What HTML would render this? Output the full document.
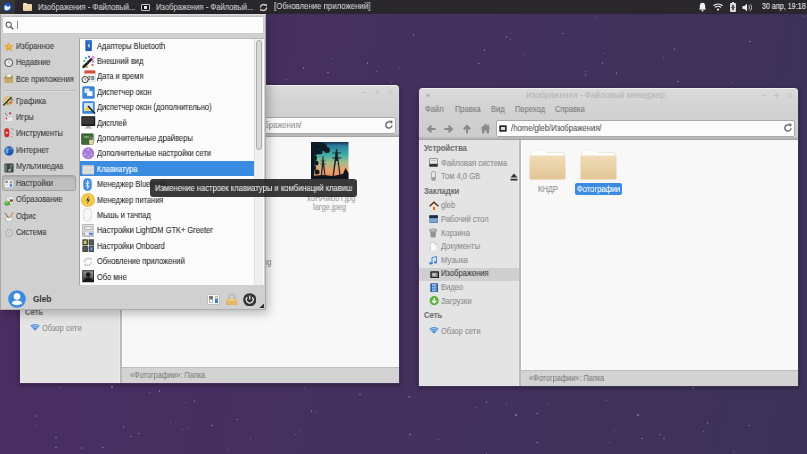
<!DOCTYPE html><html><head><meta charset="utf-8"><style>
*{margin:0;padding:0;box-sizing:border-box}
html,body{width:807px;height:454px;overflow:hidden}
body{position:relative;font-family:"Liberation Sans", sans-serif;background:linear-gradient(100deg,#4b2d63 0%,#45305f 40%,#3c3259 100%)}
.a{position:absolute}
.t{white-space:nowrap;transform-origin:0 0;will-change:transform;-webkit-text-stroke:0.1px currentColor}
</style></head><body>
<div class="a" style="left:412.9px;top:34.4px;width:1.3px;height:1.3px;background:rgba(185,165,215,.55);border-radius:50%"></div>
<div class="a" style="left:331.79999999999995px;top:58.199999999999996px;width:1.3px;height:1.3px;background:rgba(185,165,215,.55);border-radius:50%"></div>
<div class="a" style="left:366.5px;top:62.4px;width:1.3px;height:1.3px;background:rgba(185,165,215,.55);border-radius:50%"></div>
<div class="a" style="left:302.59999999999997px;top:67.4px;width:1.3px;height:1.3px;background:rgba(185,165,215,.55);border-radius:50%"></div>
<div class="a" style="left:327.4px;top:72.2px;width:1.3px;height:1.3px;background:rgba(185,165,215,.55);border-radius:50%"></div>
<div class="a" style="left:375.7px;top:71.2px;width:1.3px;height:1.3px;background:rgba(185,165,215,.55);border-radius:50%"></div>
<div class="a" style="left:399.0px;top:67.80000000000001px;width:1.3px;height:1.3px;background:rgba(185,165,215,.55);border-radius:50%"></div>
<div class="a" style="left:286.0px;top:78.9px;width:1.3px;height:1.3px;background:rgba(185,165,215,.55);border-radius:50%"></div>
<div class="a" style="left:391.0px;top:81.7px;width:1.3px;height:1.3px;background:rgba(185,165,215,.55);border-radius:50%"></div>
<div class="a" style="left:595.9px;top:17.2px;width:1.3px;height:1.3px;background:rgba(185,165,215,.55);border-radius:50%"></div>
<div class="a" style="left:505.7px;top:36.4px;width:1.3px;height:1.3px;background:rgba(185,165,215,.55);border-radius:50%"></div>
<div class="a" style="left:509.59999999999997px;top:38.8px;width:1.3px;height:1.3px;background:rgba(185,165,215,.55);border-radius:50%"></div>
<div class="a" style="left:562.4px;top:32.6px;width:1.3px;height:1.3px;background:rgba(185,165,215,.55);border-radius:50%"></div>
<div class="a" style="left:484.09999999999997px;top:49.4px;width:1.3px;height:1.3px;background:rgba(185,165,215,.55);border-radius:50%"></div>
<div class="a" style="left:522.5px;top:54.199999999999996px;width:1.3px;height:1.3px;background:rgba(185,165,215,.55);border-radius:50%"></div>
<div class="a" style="left:478.4px;top:62.8px;width:1.3px;height:1.3px;background:rgba(185,165,215,.55);border-radius:50%"></div>
<div class="a" style="left:604.1px;top:53.199999999999996px;width:1.3px;height:1.3px;background:rgba(185,165,215,.55);border-radius:50%"></div>
<div class="a" style="left:601.6999999999999px;top:62.3px;width:1.3px;height:1.3px;background:rgba(185,165,215,.55);border-radius:50%"></div>
<div class="a" style="left:584.9px;top:71.0px;width:1.3px;height:1.3px;background:rgba(185,165,215,.55);border-radius:50%"></div>
<div class="a" style="left:584.9px;top:74.30000000000001px;width:1.3px;height:1.3px;background:rgba(185,165,215,.55);border-radius:50%"></div>
<div class="a" style="left:616.0px;top:72.4px;width:1.3px;height:1.3px;background:rgba(185,165,215,.55);border-radius:50%"></div>
<div class="a" style="left:663.0px;top:56.6px;width:1.3px;height:1.3px;background:rgba(185,165,215,.55);border-radius:50%"></div>
<div class="a" style="left:673.6px;top:48.4px;width:1.3px;height:1.3px;background:rgba(185,165,215,.55);border-radius:50%"></div>
<div class="a" style="left:749.4px;top:40.699999999999996px;width:1.3px;height:1.3px;background:rgba(185,165,215,.55);border-radius:50%"></div>
<div class="a" style="left:677.4px;top:80.5px;width:1.3px;height:1.3px;background:rgba(185,165,215,.55);border-radius:50%"></div>
<div class="a" style="left:731.1px;top:82.0px;width:1.3px;height:1.3px;background:rgba(185,165,215,.55);border-radius:50%"></div>
<div class="a" style="left:803.1px;top:15.799999999999999px;width:1.3px;height:1.3px;background:rgba(185,165,215,.55);border-radius:50%"></div>
<div class="a" style="left:59.699999999999996px;top:386.9px;width:1.3px;height:1.3px;background:rgba(185,165,215,.55);border-radius:50%"></div>
<div class="a" style="left:35.0px;top:415.4px;width:1.3px;height:1.3px;background:rgba(185,165,215,.55);border-radius:50%"></div>
<div class="a" style="left:35.0px;top:424.79999999999995px;width:1.3px;height:1.3px;background:rgba(185,165,215,.55);border-radius:50%"></div>
<div class="a" style="left:55.4px;top:436.7px;width:1.3px;height:1.3px;background:rgba(185,165,215,.55);border-radius:50%"></div>
<div class="a" style="left:55.4px;top:446.9px;width:1.3px;height:1.3px;background:rgba(185,165,215,.55);border-radius:50%"></div>
<div class="a" style="left:80.80000000000001px;top:447.4px;width:1.3px;height:1.3px;background:rgba(185,165,215,.55);border-radius:50%"></div>
<div class="a" style="left:111.4px;top:386.4px;width:1.3px;height:1.3px;background:rgba(185,165,215,.55);border-radius:50%"></div>
<div class="a" style="left:149.0px;top:392.09999999999997px;width:1.3px;height:1.3px;background:rgba(185,165,215,.55);border-radius:50%"></div>
<div class="a" style="left:158.9px;top:390.4px;width:1.3px;height:1.3px;background:rgba(185,165,215,.55);border-radius:50%"></div>
<div class="a" style="left:184.70000000000002px;top:402.09999999999997px;width:1.3px;height:1.3px;background:rgba(185,165,215,.55);border-radius:50%"></div>
<div class="a" style="left:193.8px;top:400.4px;width:1.3px;height:1.3px;background:rgba(185,165,215,.55);border-radius:50%"></div>
<div class="a" style="left:170.0px;top:421.9px;width:1.3px;height:1.3px;background:rgba(185,165,215,.55);border-radius:50%"></div>
<div class="a" style="left:123.2px;top:426.29999999999995px;width:1.3px;height:1.3px;background:rgba(185,165,215,.55);border-radius:50%"></div>
<div class="a" style="left:130.4px;top:435.79999999999995px;width:1.3px;height:1.3px;background:rgba(185,165,215,.55);border-radius:50%"></div>
<div class="a" style="left:138.3px;top:433.0px;width:1.3px;height:1.3px;background:rgba(185,165,215,.55);border-radius:50%"></div>
<div class="a" style="left:181.9px;top:429.0px;width:1.3px;height:1.3px;background:rgba(185,165,215,.55);border-radius:50%"></div>
<div class="a" style="left:186.70000000000002px;top:427.79999999999995px;width:1.3px;height:1.3px;background:rgba(185,165,215,.55);border-radius:50%"></div>
<div class="a" style="left:211.3px;top:425.09999999999997px;width:1.3px;height:1.3px;background:rgba(185,165,215,.55);border-radius:50%"></div>
<div class="a" style="left:236.4px;top:419.09999999999997px;width:1.3px;height:1.3px;background:rgba(185,165,215,.55);border-radius:50%"></div>
<div class="a" style="left:250.20000000000002px;top:437.79999999999995px;width:1.3px;height:1.3px;background:rgba(185,165,215,.55);border-radius:50%"></div>
<div class="a" style="left:227.20000000000002px;top:448.9px;width:1.3px;height:1.3px;background:rgba(185,165,215,.55);border-radius:50%"></div>
<div class="a" style="left:102.4px;top:446.9px;width:1.3px;height:1.3px;background:rgba(185,165,215,.55);border-radius:50%"></div>
<div class="a" style="left:303.79999999999995px;top:388.2px;width:1.3px;height:1.3px;background:rgba(185,165,215,.55);border-radius:50%"></div>
<div class="a" style="left:310.9px;top:410.4px;width:1.3px;height:1.3px;background:rgba(185,165,215,.55);border-radius:50%"></div>
<div class="a" style="left:314.9px;top:411.2px;width:1.3px;height:1.3px;background:rgba(185,165,215,.55);border-radius:50%"></div>
<div class="a" style="left:299.79999999999995px;top:430.2px;width:1.3px;height:1.3px;background:rgba(185,165,215,.55);border-radius:50%"></div>
<div class="a" style="left:294.59999999999997px;top:433.79999999999995px;width:1.3px;height:1.3px;background:rgba(185,165,215,.55);border-radius:50%"></div>
<div class="a" style="left:359.4px;top:394.09999999999997px;width:1.3px;height:1.3px;background:rgba(185,165,215,.55);border-radius:50%"></div>
<div class="a" style="left:408.9px;top:396.4px;width:1.3px;height:1.3px;background:rgba(185,165,215,.55);border-radius:50%"></div>
<div class="a" style="left:410.09999999999997px;top:434.2px;width:1.3px;height:1.3px;background:rgba(185,165,215,.55);border-radius:50%"></div>
<div class="a" style="left:408.09999999999997px;top:396.09999999999997px;width:1.3px;height:1.3px;background:rgba(185,165,215,.55);border-radius:50%"></div>
<div class="a" style="left:474.79999999999995px;top:407.2px;width:1.3px;height:1.3px;background:rgba(185,165,215,.55);border-radius:50%"></div>
<div class="a" style="left:485.9px;top:401.29999999999995px;width:1.3px;height:1.3px;background:rgba(185,165,215,.55);border-radius:50%"></div>
<div class="a" style="left:505.7px;top:404.0px;width:1.3px;height:1.3px;background:rgba(185,165,215,.55);border-radius:50%"></div>
<div class="a" style="left:515.3px;top:414.4px;width:1.3px;height:1.3px;background:rgba(185,165,215,.55);border-radius:50%"></div>
<div class="a" style="left:536.3px;top:413.2px;width:1.3px;height:1.3px;background:rgba(185,165,215,.55);border-radius:50%"></div>
<div class="a" style="left:547.0px;top:404.0px;width:1.3px;height:1.3px;background:rgba(185,165,215,.55);border-radius:50%"></div>
<div class="a" style="left:605.6999999999999px;top:400.09999999999997px;width:1.3px;height:1.3px;background:rgba(185,165,215,.55);border-radius:50%"></div>
<div class="a" style="left:637.4px;top:414.4px;width:1.3px;height:1.3px;background:rgba(185,165,215,.55);border-radius:50%"></div>
<div class="a" style="left:613.6999999999999px;top:429.79999999999995px;width:1.3px;height:1.3px;background:rgba(185,165,215,.55);border-radius:50%"></div>
<div class="a" style="left:608.5px;top:441.7px;width:1.3px;height:1.3px;background:rgba(185,165,215,.55);border-radius:50%"></div>
<div class="a" style="left:641.4px;top:438.2px;width:1.3px;height:1.3px;background:rgba(185,165,215,.55);border-radius:50%"></div>
<div class="a" style="left:659.3px;top:434.2px;width:1.3px;height:1.3px;background:rgba(185,165,215,.55);border-radius:50%"></div>
<div class="a" style="left:663.3px;top:438.2px;width:1.3px;height:1.3px;background:rgba(185,165,215,.55);border-radius:50%"></div>
<div class="a" style="left:706.9px;top:422.29999999999995px;width:1.3px;height:1.3px;background:rgba(185,165,215,.55);border-radius:50%"></div>
<div class="a" style="left:703.0px;top:431.0px;width:1.3px;height:1.3px;background:rgba(185,165,215,.55);border-radius:50%"></div>
<div class="a" style="left:409.4px;top:433.79999999999995px;width:1.3px;height:1.3px;background:rgba(185,165,215,.55);border-radius:50%"></div>
<div class="a" style="left:437.9px;top:439.0px;width:1.3px;height:1.3px;background:rgba(185,165,215,.55);border-radius:50%"></div>
<div class="a" style="left:536.4px;top:442.09999999999997px;width:1.3px;height:1.3px;background:rgba(185,165,215,.55);border-radius:50%"></div>
<div class="a" style="left:485.9px;top:452.79999999999995px;width:1.3px;height:1.3px;background:rgba(185,165,215,.55);border-radius:50%"></div>
<div class="a" style="left:693.1px;top:387.4px;width:1.3px;height:1.3px;background:rgba(185,165,215,.55);border-radius:50%"></div>
<div class="a" style="left:748.3px;top:425.2px;width:1.3px;height:1.3px;background:rgba(185,165,215,.55);border-radius:50%"></div>
<div class="a" style="left:732.8px;top:451.2px;width:1.3px;height:1.3px;background:rgba(185,165,215,.55);border-radius:50%"></div>
<div class="a" style="left:0px;top:0px;width:807px;height:14px;background:#29272b"></div>
<div class="a" style="left:0px;top:0px;width:15px;height:14px;background:#3a3936"></div>
<svg class="a" style="left:2px;top:1.8px" width="11" height="11" viewBox="0 0 11 11"><circle cx="5.4" cy="5.1" r="4.8" fill="#0f3c8c"/><circle cx="5.4" cy="5.1" r="3.9" fill="#1f55b0"/><path d="M2.5 4.4 Q2.8 3.1 4 3.5 L5.5 4.7 L6.9 4.8 L7.5 3.6 L8.3 4.6 Q8.4 6.6 7.3 7.6 Q6 8.5 4 8.4 Q2.5 8.2 2.5 6.8Z" fill="#f4f8ff"/></svg>
<div class="a" style="left:22.5px;top:3.5px;width:9.2px;height:7.2px;background:#efd9a8;border-radius:1px"></div>
<div class="a" style="left:22.5px;top:2.8px;width:4px;height:2px;background:#f6e6c4;border-radius:1px 1px 0 0"></div>
<div class="a t" style="left:37.5px;top:1.74px;font-size:8.512px;line-height:10.214px;color:#d2d2d2;font-weight:400;transform:scaleX(0.8929);">Изображения - Файловый...</div>
<div class="a" style="left:141px;top:3.5px;width:8.5px;height:7px;background:#1b1b1b;border:1px solid #c8c8c8;border-radius:1px"></div>
<div class="a" style="left:143.5px;top:5.5px;width:3.5px;height:3px;background:#e8e8e8"></div>
<div class="a t" style="left:155.6px;top:1.74px;font-size:8.512px;line-height:10.214px;color:#d2d2d2;font-weight:400;transform:scaleX(0.8929);">Изображения - Файловый...</div>
<svg class="a" style="left:258.5px;top:2.5px" width="9" height="9" viewBox="0 0 9 9"><path d="M1.5 4.5 A3 3 0 0 1 6.8 2.6" stroke="#cfcfcf" stroke-width="1.4" fill="none"/><path d="M7.5 4.5 A3 3 0 0 1 2.2 6.4" stroke="#cfcfcf" stroke-width="1.4" fill="none"/><path d="M5.6 1.2 L8 1.2 L8 3.8Z" fill="#cfcfcf"/><path d="M3.4 7.8 L1 7.8 L1 5.2Z" fill="#cfcfcf"/></svg>
<div class="a t" style="left:273.5px;top:1.48px;font-size:8.792px;line-height:10.55px;color:#d2d2d2;font-weight:400;transform:scaleX(0.8929);">[Обновление приложений]</div>
<svg class="a" style="left:698px;top:2px" width="9" height="10" viewBox="0 0 9 10"><path d="M4.5 0.8 C2.5 0.8 1.8 2.4 1.8 4.2 L1.8 6.2 L0.8 7.6 L8.2 7.6 L7.2 6.2 L7.2 4.2 C7.2 2.4 6.5 0.8 4.5 0.8Z" fill="#f2f2f2"/><circle cx="4.5" cy="8.6" r="1" fill="#f2f2f2"/></svg>
<svg class="a" style="left:712.5px;top:3px" width="10" height="8" viewBox="0 0 10 8"><path d="M0.5 2.8 A6.5 6.5 0 0 1 9.5 2.8" stroke="#eee" stroke-width="1.2" fill="none"/><path d="M2.2 4.5 A4 4 0 0 1 7.8 4.5" stroke="#eee" stroke-width="1.2" fill="none"/><circle cx="5" cy="6.6" r="1.1" fill="#eee"/></svg>
<div class="a" style="left:730px;top:3px;width:6px;height:9px;background:#dcdcdc;border-radius:1px"></div>
<div class="a" style="left:731.8px;top:2.2px;width:2.4px;height:1px;background:#dcdcdc"></div>
<div class="a" style="left:732.3px;top:5px;width:1.4px;height:5px;background:#555"></div>
<div class="a" style="left:731px;top:6.8px;width:4px;height:1.4px;background:#555"></div>
<svg class="a" style="left:742px;top:2.5px" width="11" height="9" viewBox="0 0 11 9"><path d="M0.5 3 L2.5 3 L5 0.8 L5 8.2 L2.5 6 L0.5 6Z" fill="#eee"/><path d="M6.5 2.6 A2.4 2.4 0 0 1 6.5 6.4" stroke="#ddd" stroke-width="1" fill="none"/><path d="M8 1.2 A4.2 4.2 0 0 1 8 7.8" stroke="#ccc" stroke-width="1" fill="none"/></svg>
<div class="a t" style="left:761.5px;top:1.31px;font-size:8.866px;line-height:10.639px;color:#e8e8e8;font-weight:400;transform:scaleX(0.8065);">30 апр, 19:18</div>
<div class="a" style="left:19px;top:85px;width:381px;height:299px;box-shadow:0 1px 4px rgba(0,0,0,.35);border-radius:4px 4px 0 0"></div>
<div class="a" style="left:20px;top:85px;width:379px;height:298px;background:#d4d4d4;border-radius:4px 4px 0 0;overflow:hidden"></div>
<div class="a" style="left:20px;top:85px;width:379px;height:52px;background:linear-gradient(#dadada,#d4d4d4 30%,#cbcbcb);border-radius:4px 4px 0 0"></div>
<div class="a" style="left:23px;top:85.3px;width:373px;height:1px;background:#f0f0f0"></div>
<div class="a t" style="left:127px;top:87.11px;font-size:9.184px;line-height:11.021px;color:#b4b4b4;font-weight:400;transform:scaleX(0.8929);">Изображения - Файловый менеджер</div>
<svg class="a" style="left:25.5px;top:91px" width="6" height="4" viewBox="0 0 6 4"><path d="M0.5 0.5 L5.5 0.5 L3 3.5Z" fill="#b0b0b0"/></svg>
<div class="a" style="left:361.8px;top:92px;width:5px;height:1px;background:#c2c2c2"></div>
<div class="a" style="left:374.9px;top:92px;width:5px;height:1px;background:#c2c2c2"></div>
<div class="a" style="left:376.9px;top:90px;width:1px;height:5px;background:#c2c2c2"></div>
<svg class="a" style="left:387.6px;top:89.9px" width="5.2" height="5.2" viewBox="0 0 5.2 5.2"><path d="M0.3 0.3 L4.9 4.9 M4.9 0.3 L0.3 4.9" stroke="#c2c2c2" stroke-width="1"/></svg>
<div class="a t" style="left:26px;top:101.24px;font-size:8.512px;line-height:10.214px;color:#7a7a7a;font-weight:400;transform:scaleX(0.8929);">Файл</div>
<div class="a t" style="left:55.6px;top:101.24px;font-size:8.512px;line-height:10.214px;color:#7a7a7a;font-weight:400;transform:scaleX(0.8929);">Правка</div>
<div class="a t" style="left:91.5px;top:101.24px;font-size:8.512px;line-height:10.214px;color:#7a7a7a;font-weight:400;transform:scaleX(0.8929);">Вид</div>
<div class="a t" style="left:115.6px;top:101.24px;font-size:8.512px;line-height:10.214px;color:#7a7a7a;font-weight:400;transform:scaleX(0.8929);">Переход</div>
<div class="a t" style="left:156px;top:101.24px;font-size:8.512px;line-height:10.214px;color:#7a7a7a;font-weight:400;transform:scaleX(0.8929);">Справка</div>
<svg class="a" style="left:27px;top:120.6px" width="10" height="10" viewBox="0 0 10 10"><path d="M0.6 5 L4.6 1 L6.2 2.6 L4.8 4 L9.6 4 L9.6 6 L4.8 6 L6.2 7.4 L4.6 9Z" fill="#8a8a8a"/></svg>
<svg class="a" style="left:44.8px;top:120.6px" width="10" height="10" viewBox="0 0 10 10"><path d="M0.6 5 L4.6 1 L6.2 2.6 L4.8 4 L9.6 4 L9.6 6 L4.8 6 L6.2 7.4 L4.6 9Z" fill="#8a8a8a" transform="translate(10,0) scale(-1,1)"/></svg>
<svg class="a" style="left:63.2px;top:120.6px" width="10" height="10" viewBox="0 0 10 10"><path d="M0.6 5 L4.6 1 L6.2 2.6 L4.8 4 L9.6 4 L9.6 6 L4.8 6 L6.2 7.4 L4.6 9Z" fill="#8a8a8a" transform="translate(10,0) rotate(90)"/></svg>
<svg class="a" style="left:81.0px;top:119.8px" width="11" height="11" viewBox="0 0 11 11"><path d="M5.5 0.8 L10.6 5.6 L9 5.6 L9 10.2 L6.6 10.2 L6.6 7.4 L4.4 7.4 L4.4 10.2 L2 10.2 L2 5.6 L0.4 5.6Z" fill="#8a8a8a"/><rect x="7.6" y="1.5" width="1.3" height="2.6" fill="#8a8a8a"/></svg>
<div class="a" style="left:97px;top:116.5px;width:299px;height:17px;background:#fbfbfb;border:1px solid #a9a9a9;border-radius:2px;box-shadow:0 1px 0 #efefef"></div>
<div class="a" style="left:99.5px;top:122.3px;width:8.8px;height:6.8px;background:#262626;border:1px solid #6a6a6a;border-radius:1px"></div>
<div class="a" style="left:102.2px;top:124.4px;width:3.4px;height:2.4px;background:#e0e0e0"></div>
<div class="a t" style="left:211px;top:119.84px;font-size:8.624px;line-height:10.349px;color:#8e8e8e;font-weight:400;transform:scaleX(0.8929);">/home/gleb/Изображения/</div>
<svg class="a" style="left:383.5px;top:120px" width="10" height="10" viewBox="0 0 10 10"><path d="M8 5.2 A3.1 3.1 0 1 1 6.6 2.4" stroke="#6a6a6a" stroke-width="1.4" fill="none"/><path d="M5.2 0.6 L8.6 0.8 L8 4Z" fill="#6a6a6a"/></svg>
<div class="a" style="left:20px;top:133.6px;width:379px;height:2px;background:#b9b9b9"></div>
<div class="a" style="left:20px;top:135.5px;width:379px;height:1.2px;background:#a4a4a4"></div>
<div class="a" style="left:20px;top:137px;width:100px;height:246px;background:#e4e4e4"></div>
<div class="a" style="left:119px;top:137px;width:1px;height:246px;background:#ececec"></div>
<div class="a" style="left:120px;top:137px;width:1.5px;height:246px;background:#bababa"></div>
<div class="a" style="left:121.5px;top:137px;width:277.5px;height:230px;background:#f8f8f8;border-left:1px solid #fff"></div>
<div class="a" style="left:121.5px;top:367px;width:277.5px;height:16px;background:#d3d3d3;border-top:1px solid #bdbdbd"></div>
<div class="a t" style="left:130px;top:371.36px;font-size:8.288px;line-height:9.946px;color:#7e7e7e;font-weight:400;transform:scaleX(0.8929);">«Фотографии»: Папка</div>
<div class="a t" style="left:25px;top:139.94px;font-size:8.512px;line-height:10.214px;color:#6a6a6a;font-weight:700;transform:scaleX(0.8929);">Устройства</div>
<div class="a" style="left:20px;top:264.8px;width:100px;height:13.2px;background:#cfcfcf"></div>
<div class="a t" style="left:25px;top:182.54px;font-size:8.512px;line-height:10.214px;color:#6a6a6a;font-weight:700;transform:scaleX(0.8929);">Закладки</div>
<div class="a t" style="left:42px;top:154.84px;font-size:8.512px;line-height:10.214px;color:#8a8a8a;font-weight:400;transform:scaleX(0.8929);">Файловая система</div>
<div class="a t" style="left:42px;top:168.34px;font-size:8.512px;line-height:10.214px;color:#8a8a8a;font-weight:400;transform:scaleX(0.8929);">Том 4,0 GB</div>
<div class="a t" style="left:42px;top:197.24px;font-size:8.512px;line-height:10.214px;color:#8a8a8a;font-weight:400;transform:scaleX(0.8929);">gleb</div>
<div class="a t" style="left:42px;top:210.94px;font-size:8.512px;line-height:10.214px;color:#8a8a8a;font-weight:400;transform:scaleX(0.8929);">Рабочий стол</div>
<div class="a t" style="left:42px;top:224.94px;font-size:8.512px;line-height:10.214px;color:#8a8a8a;font-weight:400;transform:scaleX(0.8929);">Корзина</div>
<div class="a t" style="left:42px;top:238.44px;font-size:8.512px;line-height:10.214px;color:#8a8a8a;font-weight:400;transform:scaleX(0.8929);">Документы</div>
<div class="a t" style="left:42px;top:251.94px;font-size:8.512px;line-height:10.214px;color:#8a8a8a;font-weight:400;transform:scaleX(0.8929);">Музыка</div>
<div class="a t" style="left:42px;top:265.44px;font-size:8.512px;line-height:10.214px;color:#3c3c3c;font-weight:400;transform:scaleX(0.8929);">Изображения</div>
<div class="a t" style="left:42px;top:278.94px;font-size:8.512px;line-height:10.214px;color:#8a8a8a;font-weight:400;transform:scaleX(0.8929);">Видео</div>
<div class="a t" style="left:42px;top:292.84px;font-size:8.512px;line-height:10.214px;color:#8a8a8a;font-weight:400;transform:scaleX(0.8929);">Загрузки</div>
<div class="a t" style="left:25px;top:307.24px;font-size:8.512px;line-height:10.214px;color:#6a6a6a;font-weight:700;transform:scaleX(0.8929);">Сеть</div>
<div class="a t" style="left:42px;top:322.54px;font-size:8.512px;line-height:10.214px;color:#8a8a8a;font-weight:400;transform:scaleX(0.8929);">Обзор сети</div>
<svg class="a" style="left:30.2px;top:154.8px" width="9" height="9" viewBox="0 0 9 9"><rect x="0.4" y="0.4" width="8.2" height="8.2" rx="1.2" fill="#e6e6e6" stroke="#666" stroke-width="0.7"/><rect x="0.4" y="5.8" width="8.2" height="2.8" fill="#333"/><path d="M2 2.5 H7" stroke="#999" stroke-width="0.5"/></svg>
<svg class="a" style="left:32.2px;top:168px" width="5" height="10" viewBox="0 0 5 10"><rect x="0.5" y="0.5" width="4" height="9" rx="1.6" fill="#e8e8e8" stroke="#8a8a8a" stroke-width="0.7"/><rect x="1" y="6" width="3" height="3" rx="1" fill="#9a9a9a"/></svg>
<svg class="a" style="left:111px;top:170px" width="8" height="8" viewBox="0 0 8 8"><path d="M4 0.6 L7.5 4.4 L0.5 4.4Z M0.5 5.8 L7.5 5.8 L7.5 7.4 L0.5 7.4Z" fill="#333"/></svg>
<svg class="a" style="left:30px;top:198px" width="10" height="9.5" viewBox="0 0 10 9.5"><path d="M1.8 4.5 L5 1.8 L8.2 4.5 L8.2 9 L1.8 9Z" fill="#f2e6d6"/><path d="M0.6 5.2 L5 1.2 L9.4 5.2" stroke="#4a3026" stroke-width="1.5" fill="none"/><rect x="4" y="5.8" width="2" height="3.2" fill="#d8692a"/></svg>
<svg class="a" style="left:30px;top:212.2px" width="9.2" height="8.2" viewBox="0 0 9.2 8.2"><rect x="0.3" y="0.3" width="8.6" height="7.6" rx="0.6" fill="#5d86b8"/><rect x="0.3" y="0.3" width="8.6" height="2.6" fill="#1c2a40"/><rect x="1.2" y="3.8" width="6.8" height="3.2" fill="#7fa6d4"/></svg>
<svg class="a" style="left:30.2px;top:224.8px" width="8.2" height="10.2" viewBox="0 0 8.2 10.2"><ellipse cx="4.1" cy="2.2" rx="3.8" ry="1.8" fill="#8a8a8a"/><path d="M0.9 2.6 L1.7 9.6 L6.5 9.6 L7.3 2.6Z" fill="#a0a0a0"/><path d="M2.6 4 L2.9 9 M4.1 4 V9 M5.6 4 L5.3 9" stroke="#777" stroke-width="0.5"/><ellipse cx="4.1" cy="2.1" rx="2.6" ry="0.9" fill="#c8c8c8"/></svg>
<svg class="a" style="left:30.8px;top:238.6px" width="7.6" height="9.6" viewBox="0 0 7.6 9.6"><path d="M0.4 0.4 L5 0.4 L7.2 2.6 L7.2 9.2 L0.4 9.2Z" fill="#fafafa" stroke="#b8b8b8" stroke-width="0.6"/><path d="M5 0.4 L5 2.6 L7.2 2.6" fill="#e0e0e0" stroke="#b8b8b8" stroke-width="0.5"/></svg>
<svg class="a" style="left:30.2px;top:252.6px" width="8.2" height="9" viewBox="0 0 8.2 9"><path d="M3 7.3 L3 1.6 L7.6 0.4 L7.6 6" stroke="#3f86cf" stroke-width="1" fill="none"/><ellipse cx="1.9" cy="7.3" rx="1.7" ry="1.3" fill="#3f86cf"/><ellipse cx="6.5" cy="6.2" rx="1.7" ry="1.3" fill="#3f86cf"/></svg>
<svg class="a" style="left:30.7px;top:267.6px" width="9.4" height="7.8" viewBox="0 0 9.4 7.8"><rect x="0.3" y="0.3" width="8.8" height="7.2" rx="0.6" fill="#1c1c1c"/><rect x="1.6" y="1.5" width="6.2" height="4.6" fill="#8a8a8a"/><rect x="2.5" y="2.5" width="3" height="2" fill="#d8d8d8"/></svg>
<svg class="a" style="left:30.8px;top:280px" width="8.4" height="9.4" viewBox="0 0 8.4 9.4"><rect x="0.3" y="0.3" width="7.8" height="8.8" rx="0.6" fill="#2f5fa0"/><rect x="2" y="1" width="4.4" height="7.4" fill="#8ab8ea"/><path d="M2 3.4 H6.4 M2 6 H6.4" stroke="#2f5fa0" stroke-width="0.6"/></svg>
<svg class="a" style="left:29.6px;top:293.3px" width="10.4" height="9.4" viewBox="0 0 10.4 9.4"><circle cx="5.2" cy="4.7" r="4.6" fill="#5cb03e"/><path d="M5.2 2 L5.2 6.6 M3 4.6 L5.2 6.8 L7.4 4.6" stroke="#fff" stroke-width="1.3" fill="none"/></svg>
<svg class="a" style="left:30px;top:323px" width="10" height="8" viewBox="0 0 10 8"><path d="M0.3 2.8 A6.8 6.8 0 0 1 9.7 2.8 L5 7.8Z" fill="#3f8ee0"/><path d="M1.8 3.6 A4.6 4.6 0 0 1 8.2 3.6" stroke="#e4e4e4" stroke-width="0.7" fill="none"/><path d="M3.1 4.9 A2.6 2.6 0 0 1 6.9 4.9" stroke="#e4e4e4" stroke-width="0.7" fill="none"/></svg>
<svg class="a" style="left:311px;top:142px" width="37.5" height="37" viewBox="0 0 37.5 37"><defs><linearGradient id="tg" x1="0" y1="0" x2="0" y2="1"><stop offset="0" stop-color="#1a3050"/><stop offset="0.1" stop-color="#2a7ca0"/><stop offset="0.35" stop-color="#3eb0a4"/><stop offset="0.55" stop-color="#a2bc8e"/><stop offset="0.75" stop-color="#eaa26c"/><stop offset="1" stop-color="#e48c5c"/></linearGradient></defs><rect width="37.5" height="37" fill="url(#tg)"/><g fill="#0e1a26"><circle cx="6" cy="3" r="5"/><circle cx="12" cy="5" r="4"/><circle cx="16" cy="8" r="3"/><circle cx="4" cy="9" r="4"/><circle cx="9" cy="10" r="2.5"/><circle cx="3" cy="16" r="3"/><circle cx="5" cy="21" r="2.5"/><circle cx="2" cy="26" r="3"/><circle cx="6" cy="30" r="2.5"/><rect x="0" y="0" width="3" height="37"/></g><path d="M25 7 L26 7 L30 36 L28.8 36 L26.5 19 L25 19 L22.5 36 L21.3 36Z" fill="#15202a"/><path d="M21.5 11 L30 11 M21 16 L30.5 16" stroke="#15202a" stroke-width="0.9"/><path d="M11.6 14 L12.3 14 L14.8 36 L13.8 36 L12.1 24 L10.6 36 L9.6 36Z" fill="#1e2830"/><path d="M9.4 19 L14.6 19 M9.2 22 L14.8 22" stroke="#1e2830" stroke-width="0.6"/><path d="M0 34 L12 33 L22 34 L32 32 L34.5 26 L37.5 31 L37.5 37 L0 37Z" fill="#10141c"/></svg>
<div class="a t" style="left:306.8px;top:192.74px;font-size:8.512px;line-height:10.214px;color:#9a9a9a;font-weight:400;transform:scaleX(0.8929);">xoHAwbbT.jpg</div>
<div class="a t" style="left:313.2px;top:201.84px;font-size:8.512px;line-height:10.214px;color:#9a9a9a;font-weight:400;transform:scaleX(0.8929);">large.jpeg</div>
<div class="a t" style="left:263.2px;top:257.13px;font-size:8.736px;line-height:10.483px;color:#8a8a8a;font-weight:400;transform:scaleX(0.8929);">pg</div>
<div class="a" style="left:418px;top:88px;width:381px;height:299px;box-shadow:0 1px 4px rgba(0,0,0,.35);border-radius:4px 4px 0 0"></div>
<div class="a" style="left:419px;top:88px;width:379px;height:298px;background:#d4d4d4;border-radius:4px 4px 0 0;overflow:hidden"></div>
<div class="a" style="left:419px;top:88px;width:379px;height:52px;background:linear-gradient(#dadada,#d4d4d4 30%,#cbcbcb);border-radius:4px 4px 0 0"></div>
<div class="a" style="left:422px;top:88.3px;width:373px;height:1px;background:#f0f0f0"></div>
<div class="a t" style="left:526px;top:90.11px;font-size:9.184px;line-height:11.021px;color:#b4b4b4;font-weight:400;transform:scaleX(0.8929);">Изображения - Файловый менеджер</div>
<svg class="a" style="left:424.5px;top:94px" width="6" height="4" viewBox="0 0 6 4"><path d="M0.5 0.5 L5.5 0.5 L3 3.5Z" fill="#b0b0b0"/></svg>
<div class="a" style="left:760.8px;top:95px;width:5px;height:1px;background:#c2c2c2"></div>
<div class="a" style="left:773.9px;top:95px;width:5px;height:1px;background:#c2c2c2"></div>
<div class="a" style="left:775.9px;top:93px;width:1px;height:5px;background:#c2c2c2"></div>
<svg class="a" style="left:786.6px;top:92.9px" width="5.2" height="5.2" viewBox="0 0 5.2 5.2"><path d="M0.3 0.3 L4.9 4.9 M4.9 0.3 L0.3 4.9" stroke="#c2c2c2" stroke-width="1"/></svg>
<div class="a t" style="left:425px;top:104.24px;font-size:8.512px;line-height:10.214px;color:#7a7a7a;font-weight:400;transform:scaleX(0.8929);">Файл</div>
<div class="a t" style="left:454.6px;top:104.24px;font-size:8.512px;line-height:10.214px;color:#7a7a7a;font-weight:400;transform:scaleX(0.8929);">Правка</div>
<div class="a t" style="left:490.5px;top:104.24px;font-size:8.512px;line-height:10.214px;color:#7a7a7a;font-weight:400;transform:scaleX(0.8929);">Вид</div>
<div class="a t" style="left:514.6px;top:104.24px;font-size:8.512px;line-height:10.214px;color:#7a7a7a;font-weight:400;transform:scaleX(0.8929);">Переход</div>
<div class="a t" style="left:555px;top:104.24px;font-size:8.512px;line-height:10.214px;color:#7a7a7a;font-weight:400;transform:scaleX(0.8929);">Справка</div>
<svg class="a" style="left:426px;top:123.6px" width="10" height="10" viewBox="0 0 10 10"><path d="M0.6 5 L4.6 1 L6.2 2.6 L4.8 4 L9.6 4 L9.6 6 L4.8 6 L6.2 7.4 L4.6 9Z" fill="#8a8a8a"/></svg>
<svg class="a" style="left:443.8px;top:123.6px" width="10" height="10" viewBox="0 0 10 10"><path d="M0.6 5 L4.6 1 L6.2 2.6 L4.8 4 L9.6 4 L9.6 6 L4.8 6 L6.2 7.4 L4.6 9Z" fill="#8a8a8a" transform="translate(10,0) scale(-1,1)"/></svg>
<svg class="a" style="left:462.2px;top:123.6px" width="10" height="10" viewBox="0 0 10 10"><path d="M0.6 5 L4.6 1 L6.2 2.6 L4.8 4 L9.6 4 L9.6 6 L4.8 6 L6.2 7.4 L4.6 9Z" fill="#8a8a8a" transform="translate(10,0) rotate(90)"/></svg>
<svg class="a" style="left:480.0px;top:122.80000000000001px" width="11" height="11" viewBox="0 0 11 11"><path d="M5.5 0.8 L10.6 5.6 L9 5.6 L9 10.2 L6.6 10.2 L6.6 7.4 L4.4 7.4 L4.4 10.2 L2 10.2 L2 5.6 L0.4 5.6Z" fill="#8a8a8a"/><rect x="7.6" y="1.5" width="1.3" height="2.6" fill="#8a8a8a"/></svg>
<div class="a" style="left:496px;top:119.5px;width:299px;height:17px;background:#fbfbfb;border:1px solid #a9a9a9;border-radius:2px;box-shadow:0 1px 0 #efefef"></div>
<div class="a" style="left:498.5px;top:125.3px;width:8.8px;height:6.8px;background:#262626;border:1px solid #6a6a6a;border-radius:1px"></div>
<div class="a" style="left:501.2px;top:127.4px;width:3.4px;height:2.4px;background:#e0e0e0"></div>
<div class="a t" style="left:511px;top:122.84px;font-size:8.624px;line-height:10.349px;color:#555;font-weight:400;transform:scaleX(0.8929);">/home/gleb/Изображения/</div>
<svg class="a" style="left:782.5px;top:123px" width="10" height="10" viewBox="0 0 10 10"><path d="M8 5.2 A3.1 3.1 0 1 1 6.6 2.4" stroke="#6a6a6a" stroke-width="1.4" fill="none"/><path d="M5.2 0.6 L8.6 0.8 L8 4Z" fill="#6a6a6a"/></svg>
<div class="a" style="left:419px;top:136.6px;width:379px;height:2px;background:#b9b9b9"></div>
<div class="a" style="left:419px;top:138.5px;width:379px;height:1.2px;background:#a4a4a4"></div>
<div class="a" style="left:419px;top:140px;width:100px;height:246px;background:#e4e4e4"></div>
<div class="a" style="left:518px;top:140px;width:1px;height:246px;background:#ececec"></div>
<div class="a" style="left:519px;top:140px;width:1.5px;height:246px;background:#bababa"></div>
<div class="a" style="left:520.5px;top:140px;width:277.5px;height:230px;background:#f8f8f8;border-left:1px solid #fff"></div>
<div class="a" style="left:520.5px;top:370px;width:277.5px;height:16px;background:#d3d3d3;border-top:1px solid #bdbdbd"></div>
<div class="a t" style="left:529px;top:374.36px;font-size:8.288px;line-height:9.946px;color:#7e7e7e;font-weight:400;transform:scaleX(0.8929);">«Фотографии»: Папка</div>
<div class="a t" style="left:424px;top:142.94px;font-size:8.512px;line-height:10.214px;color:#6a6a6a;font-weight:700;transform:scaleX(0.8929);">Устройства</div>
<div class="a" style="left:419px;top:267.8px;width:100px;height:13.2px;background:#cfcfcf"></div>
<div class="a t" style="left:424px;top:185.54px;font-size:8.512px;line-height:10.214px;color:#6a6a6a;font-weight:700;transform:scaleX(0.8929);">Закладки</div>
<div class="a t" style="left:441px;top:157.84px;font-size:8.512px;line-height:10.214px;color:#8a8a8a;font-weight:400;transform:scaleX(0.8929);">Файловая система</div>
<div class="a t" style="left:441px;top:171.34px;font-size:8.512px;line-height:10.214px;color:#8a8a8a;font-weight:400;transform:scaleX(0.8929);">Том 4,0 GB</div>
<div class="a t" style="left:441px;top:200.24px;font-size:8.512px;line-height:10.214px;color:#8a8a8a;font-weight:400;transform:scaleX(0.8929);">gleb</div>
<div class="a t" style="left:441px;top:213.94px;font-size:8.512px;line-height:10.214px;color:#8a8a8a;font-weight:400;transform:scaleX(0.8929);">Рабочий стол</div>
<div class="a t" style="left:441px;top:227.94px;font-size:8.512px;line-height:10.214px;color:#8a8a8a;font-weight:400;transform:scaleX(0.8929);">Корзина</div>
<div class="a t" style="left:441px;top:241.44px;font-size:8.512px;line-height:10.214px;color:#8a8a8a;font-weight:400;transform:scaleX(0.8929);">Документы</div>
<div class="a t" style="left:441px;top:254.94px;font-size:8.512px;line-height:10.214px;color:#8a8a8a;font-weight:400;transform:scaleX(0.8929);">Музыка</div>
<div class="a t" style="left:441px;top:268.44px;font-size:8.512px;line-height:10.214px;color:#3c3c3c;font-weight:400;transform:scaleX(0.8929);">Изображения</div>
<div class="a t" style="left:441px;top:281.94px;font-size:8.512px;line-height:10.214px;color:#8a8a8a;font-weight:400;transform:scaleX(0.8929);">Видео</div>
<div class="a t" style="left:441px;top:295.84px;font-size:8.512px;line-height:10.214px;color:#8a8a8a;font-weight:400;transform:scaleX(0.8929);">Загрузки</div>
<div class="a t" style="left:424px;top:310.24px;font-size:8.512px;line-height:10.214px;color:#6a6a6a;font-weight:700;transform:scaleX(0.8929);">Сеть</div>
<div class="a t" style="left:441px;top:325.54px;font-size:8.512px;line-height:10.214px;color:#8a8a8a;font-weight:400;transform:scaleX(0.8929);">Обзор сети</div>
<svg class="a" style="left:429.2px;top:157.8px" width="9" height="9" viewBox="0 0 9 9"><rect x="0.4" y="0.4" width="8.2" height="8.2" rx="1.2" fill="#e6e6e6" stroke="#666" stroke-width="0.7"/><rect x="0.4" y="5.8" width="8.2" height="2.8" fill="#333"/><path d="M2 2.5 H7" stroke="#999" stroke-width="0.5"/></svg>
<svg class="a" style="left:431.2px;top:171px" width="5" height="10" viewBox="0 0 5 10"><rect x="0.5" y="0.5" width="4" height="9" rx="1.6" fill="#e8e8e8" stroke="#8a8a8a" stroke-width="0.7"/><rect x="1" y="6" width="3" height="3" rx="1" fill="#9a9a9a"/></svg>
<svg class="a" style="left:510px;top:173px" width="8" height="8" viewBox="0 0 8 8"><path d="M4 0.6 L7.5 4.4 L0.5 4.4Z M0.5 5.8 L7.5 5.8 L7.5 7.4 L0.5 7.4Z" fill="#333"/></svg>
<svg class="a" style="left:429px;top:201px" width="10" height="9.5" viewBox="0 0 10 9.5"><path d="M1.8 4.5 L5 1.8 L8.2 4.5 L8.2 9 L1.8 9Z" fill="#f2e6d6"/><path d="M0.6 5.2 L5 1.2 L9.4 5.2" stroke="#4a3026" stroke-width="1.5" fill="none"/><rect x="4" y="5.8" width="2" height="3.2" fill="#d8692a"/></svg>
<svg class="a" style="left:429px;top:215.2px" width="9.2" height="8.2" viewBox="0 0 9.2 8.2"><rect x="0.3" y="0.3" width="8.6" height="7.6" rx="0.6" fill="#5d86b8"/><rect x="0.3" y="0.3" width="8.6" height="2.6" fill="#1c2a40"/><rect x="1.2" y="3.8" width="6.8" height="3.2" fill="#7fa6d4"/></svg>
<svg class="a" style="left:429.2px;top:227.8px" width="8.2" height="10.2" viewBox="0 0 8.2 10.2"><ellipse cx="4.1" cy="2.2" rx="3.8" ry="1.8" fill="#8a8a8a"/><path d="M0.9 2.6 L1.7 9.6 L6.5 9.6 L7.3 2.6Z" fill="#a0a0a0"/><path d="M2.6 4 L2.9 9 M4.1 4 V9 M5.6 4 L5.3 9" stroke="#777" stroke-width="0.5"/><ellipse cx="4.1" cy="2.1" rx="2.6" ry="0.9" fill="#c8c8c8"/></svg>
<svg class="a" style="left:429.8px;top:241.6px" width="7.6" height="9.6" viewBox="0 0 7.6 9.6"><path d="M0.4 0.4 L5 0.4 L7.2 2.6 L7.2 9.2 L0.4 9.2Z" fill="#fafafa" stroke="#b8b8b8" stroke-width="0.6"/><path d="M5 0.4 L5 2.6 L7.2 2.6" fill="#e0e0e0" stroke="#b8b8b8" stroke-width="0.5"/></svg>
<svg class="a" style="left:429.2px;top:255.6px" width="8.2" height="9" viewBox="0 0 8.2 9"><path d="M3 7.3 L3 1.6 L7.6 0.4 L7.6 6" stroke="#3f86cf" stroke-width="1" fill="none"/><ellipse cx="1.9" cy="7.3" rx="1.7" ry="1.3" fill="#3f86cf"/><ellipse cx="6.5" cy="6.2" rx="1.7" ry="1.3" fill="#3f86cf"/></svg>
<svg class="a" style="left:429.7px;top:270.6px" width="9.4" height="7.8" viewBox="0 0 9.4 7.8"><rect x="0.3" y="0.3" width="8.8" height="7.2" rx="0.6" fill="#1c1c1c"/><rect x="1.6" y="1.5" width="6.2" height="4.6" fill="#8a8a8a"/><rect x="2.5" y="2.5" width="3" height="2" fill="#d8d8d8"/></svg>
<svg class="a" style="left:429.8px;top:283px" width="8.4" height="9.4" viewBox="0 0 8.4 9.4"><rect x="0.3" y="0.3" width="7.8" height="8.8" rx="0.6" fill="#2f5fa0"/><rect x="2" y="1" width="4.4" height="7.4" fill="#8ab8ea"/><path d="M2 3.4 H6.4 M2 6 H6.4" stroke="#2f5fa0" stroke-width="0.6"/></svg>
<svg class="a" style="left:428.6px;top:296.3px" width="10.4" height="9.4" viewBox="0 0 10.4 9.4"><circle cx="5.2" cy="4.7" r="4.6" fill="#5cb03e"/><path d="M5.2 2 L5.2 6.6 M3 4.6 L5.2 6.8 L7.4 4.6" stroke="#fff" stroke-width="1.3" fill="none"/></svg>
<svg class="a" style="left:429px;top:326px" width="10" height="8" viewBox="0 0 10 8"><path d="M0.3 2.8 A6.8 6.8 0 0 1 9.7 2.8 L5 7.8Z" fill="#3f8ee0"/><path d="M1.8 3.6 A4.6 4.6 0 0 1 8.2 3.6" stroke="#e4e4e4" stroke-width="0.7" fill="none"/><path d="M3.1 4.9 A2.6 2.6 0 0 1 6.9 4.9" stroke="#e4e4e4" stroke-width="0.7" fill="none"/></svg>
<svg class="a" style="left:528.5px;top:150px" width="37" height="30" viewBox="0 0 37 30"><path d="M2 1.5 Q2 0 3.5 0 L16 0 L18 2.5 L34 2.5 Q35.5 2.5 35.5 4 L35.5 8 L2 8Z" fill="#fff" stroke="#d8d0c0" stroke-width="0.5"/><path d="M0.5 6.5 Q0.5 5.5 1.5 5.5 L35.5 5.5 Q36.5 5.5 36.5 6.5 L36.5 28 Q36.5 29.5 35 29.5 L2 29.5 Q0.5 29.5 0.5 28Z" fill="url(#fg)"/><defs><linearGradient id="fg" x1="0" y1="0" x2="0" y2="1"><stop offset="0" stop-color="#f0dcb8"/><stop offset="1" stop-color="#e2c594"/></linearGradient></defs></svg>
<svg class="a" style="left:580px;top:150px" width="37" height="30" viewBox="0 0 37 30"><path d="M2 1.5 Q2 0 3.5 0 L16 0 L18 2.5 L34 2.5 Q35.5 2.5 35.5 4 L35.5 8 L2 8Z" fill="#fff" stroke="#d8d0c0" stroke-width="0.5"/><path d="M0.5 6.5 Q0.5 5.5 1.5 5.5 L35.5 5.5 Q36.5 5.5 36.5 6.5 L36.5 28 Q36.5 29.5 35 29.5 L2 29.5 Q0.5 29.5 0.5 28Z" fill="url(#fg)"/><defs><linearGradient id="fg" x1="0" y1="0" x2="0" y2="1"><stop offset="0" stop-color="#f0dcb8"/><stop offset="1" stop-color="#e2c594"/></linearGradient></defs></svg>
<div class="a t" style="left:537.5px;top:183.74px;font-size:8.512px;line-height:10.214px;color:#8a8a8a;font-weight:400;transform:scaleX(0.8929);">КНДР</div>
<div class="a" style="left:575.2px;top:183.3px;width:46.4px;height:12px;background:#3b8ce0;border-radius:2px"></div>
<div class="a t" style="left:577px;top:183.74px;font-size:8.512px;line-height:10.214px;color:#ffffff;font-weight:400;transform:scaleX(0.8929);">Фотографии</div>
<div class="a" style="left:0px;top:14px;width:266px;height:296.2px;background:#d0d0d0;box-shadow:2px 3px 10px rgba(0,0,0,.28);border-left:1.3px solid #a6a6a6;border-right:1.5px solid #a8a8a8;border-bottom:1.3px solid #adadad;border-top:1px solid #dcdcdc"></div>
<div class="a" style="left:2.2px;top:16.4px;width:261.4px;height:17.6px;background:#fcfcfc;border:1px solid #cdcdcd;border-top-color:#bcbcbc;border-radius:2px"></div>
<svg class="a" style="left:4.5px;top:20.5px" width="9" height="9" viewBox="0 0 9 9"><circle cx="3.7" cy="3.7" r="2.7" stroke="#3a3a3a" stroke-width="1" fill="none"/><path d="M5.6 5.6 L8.3 8.3" stroke="#3a3a3a" stroke-width="1.2"/></svg>
<div class="a" style="left:17.4px;top:20.6px;width:0.9px;height:8.6px;background:#8a8a8a"></div>
<div class="a" style="left:3.5px;top:89.8px;width:72px;height:1px;background:#bdbdbd"></div>
<div class="a" style="left:3.5px;top:90.8px;width:72px;height:1px;background:#dadada"></div>
<div class="a" style="left:2.2px;top:175.2px;width:73.6px;height:16.3px;background:linear-gradient(#b6b6b6,#bebebe 40%,#c0c0c0);border:1px solid #a2a2a2;border-radius:2.5px;box-shadow:inset 0 1px 1px rgba(0,0,0,.08)"></div>
<div class="a t" style="left:15.5px;top:40.9px;font-size:8.456px;line-height:10.147px;color:#3a3a3a;font-weight:400;transform:scaleX(0.8929);">Избранное</div>
<div class="a t" style="left:15.5px;top:57.3px;font-size:8.456px;line-height:10.147px;color:#3a3a3a;font-weight:400;transform:scaleX(0.8929);">Недавние</div>
<div class="a t" style="left:15.5px;top:73.8px;font-size:8.456px;line-height:10.147px;color:#3a3a3a;font-weight:400;transform:scaleX(0.8929);">Все приложения</div>
<div class="a t" style="left:15.5px;top:95.5px;font-size:8.456px;line-height:10.147px;color:#3a3a3a;font-weight:400;transform:scaleX(0.8929);">Графика</div>
<div class="a t" style="left:15.5px;top:111.9px;font-size:8.456px;line-height:10.147px;color:#3a3a3a;font-weight:400;transform:scaleX(0.8929);">Игры</div>
<div class="a t" style="left:15.5px;top:128.4px;font-size:8.456px;line-height:10.147px;color:#3a3a3a;font-weight:400;transform:scaleX(0.8929);">Инструменты</div>
<div class="a t" style="left:15.5px;top:144.8px;font-size:8.456px;line-height:10.147px;color:#3a3a3a;font-weight:400;transform:scaleX(0.8929);">Интернет</div>
<div class="a t" style="left:15.5px;top:161.3px;font-size:8.456px;line-height:10.147px;color:#3a3a3a;font-weight:400;transform:scaleX(0.8929);">Мультимедиа</div>
<div class="a t" style="left:15.5px;top:177.8px;font-size:8.456px;line-height:10.147px;color:#3a3a3a;font-weight:400;transform:scaleX(0.8929);">Настройки</div>
<div class="a t" style="left:15.5px;top:194.3px;font-size:8.456px;line-height:10.147px;color:#3a3a3a;font-weight:400;transform:scaleX(0.8929);">Образование</div>
<div class="a t" style="left:15.5px;top:210.8px;font-size:8.456px;line-height:10.147px;color:#3a3a3a;font-weight:400;transform:scaleX(0.8929);">Офис</div>
<div class="a t" style="left:15.5px;top:227.2px;font-size:8.456px;line-height:10.147px;color:#3a3a3a;font-weight:400;transform:scaleX(0.8929);">Система</div>
<svg class="a" style="left:3.6px;top:41.6px" width="9.5" height="9.5" viewBox="0 0 10 10"><defs><linearGradient id="sg" x1="0" y1="0" x2="0" y2="1"><stop offset="0" stop-color="#fbd35a"/><stop offset="1" stop-color="#e9961e"/></linearGradient></defs><path d="M5 0.9 L6.3 3.6 L9.2 3.9 L7 5.9 L7.6 8.9 L5 7.4 L2.4 8.9 L3 5.9 L0.8 3.9 L3.7 3.6Z" fill="url(#sg)" stroke="#e0a030" stroke-width="0.9" stroke-linejoin="round"/></svg>
<svg class="a" style="left:3.8px;top:57.8px" width="9.5" height="9.5" viewBox="0 0 10 10"><circle cx="5" cy="5" r="4.1" fill="#ececec" stroke="#454545" stroke-width="1"/><path d="M5 2.5 L5 5 L6.8 6" stroke="#999" stroke-width="0.7" fill="none"/></svg>
<svg class="a" style="left:3.8px;top:74px" width="9.5" height="9.5" viewBox="0 0 10 10"><path d="M1 2 L4 0.5 L6 2.5 L9 1 L9 4 L1 4Z" fill="#7fae4a"/><path d="M3 1 L7 0.5 L7.5 4 L2.5 4Z" fill="#f0f0f0"/><rect x="0.3" y="3.5" width="9.4" height="6" fill="#c8a86a" rx="0.5"/><rect x="0.3" y="3.5" width="9.4" height="1.2" fill="#a8884a"/></svg>
<svg class="a" style="left:3.2px;top:96.4px" width="11" height="9.6" viewBox="0 0 11 9.6"><ellipse cx="5.5" cy="4.8" rx="5.2" ry="4.3" fill="#e2c27e" stroke="#c8a060" stroke-width="0.4"/><circle cx="7.6" cy="6.6" r="1.1" fill="#d03a3a"/><circle cx="8.6" cy="3.6" r="1" fill="#3a6ac0"/><circle cx="4.8" cy="7.4" r="1" fill="#4aa040"/><path d="M0.8 9 L8.2 1.4" stroke="#2a2a2a" stroke-width="1.3" stroke-linecap="round"/></svg>
<svg class="a" style="left:4px;top:111.8px" width="9.6" height="10" viewBox="0 0 9.6 10"><path d="M0.4 5.4 L9.2 5.4 L9.2 9.6 L0.4 9.6Z" fill="#ececec" stroke="#b8b8b8" stroke-width="0.5"/><path d="M0.6 5.4 L9 5.4 L8 4.2 L1.6 4.2Z" fill="#dadada"/><rect x="5.2" y="1.6" width="1.8" height="4" fill="#f4f4f4" stroke="#aaa" stroke-width="0.4"/><circle cx="6.1" cy="1.3" r="1.1" fill="#c82a3a"/><path d="M1 0.8 L3.4 4" stroke="#666" stroke-width="0.8"/><circle cx="2.4" cy="6.6" r="0.9" fill="#c82a3a"/></svg>
<svg class="a" style="left:3.6px;top:128.4px" width="10" height="9.6" viewBox="0 0 10 9.6"><rect x="0.3" y="0.3" width="5" height="9" rx="2.2" fill="#d42a2a"/><circle cx="2.8" cy="4.8" r="1" fill="#f4f4f4"/><path d="M6.2 0.8 L9 0.8 L9 2.6 M6.4 3.6 L9 6.4 M6.2 8.8 L9 8.8" stroke="#a8a8a8" stroke-width="0.9" fill="none"/></svg>
<svg class="a" style="left:3.6px;top:146px" width="10" height="10" viewBox="0 0 10 10"><circle cx="5" cy="5" r="4.7" fill="#1f5aa8"/><path d="M2.2 2.6 Q4 2 4.6 3.6 Q3.6 5 4.4 6.4 Q3.6 8 2 7.2 Q1 5 2.2 2.6Z" fill="#6aa8e0"/><path d="M6 1.2 Q8 2 8.6 4 Q7.2 4.4 6.6 3.2Z" fill="#5a98d8"/><circle cx="3.6" cy="3" r="2" fill="#9cc8f0" opacity=".35"/></svg>
<svg class="a" style="left:3.6px;top:162.6px" width="10" height="10" viewBox="0 0 10 10"><rect x="0.4" y="0.6" width="9.2" height="8.8" rx="1" fill="#3c4446"/><rect x="1.2" y="1.5" width="1.6" height="7" fill="#8a9698"/><path d="M1.2 3 H2.8 M1.2 5 H2.8 M1.2 7 H2.8" stroke="#3c4446" stroke-width="0.6"/><circle cx="5.6" cy="7.2" r="1.3" fill="#aab4b6"/><path d="M6.8 7.2 V2.2 L8.6 3" stroke="#aab4b6" stroke-width="0.7" fill="none"/></svg>
<svg class="a" style="left:3.8px;top:179px" width="9.5" height="9.5" viewBox="0 0 10 10"><rect x="0.3" y="1" width="9.4" height="8" fill="#f4f4f4" stroke="#b8b8b8" stroke-width="0.5"/><rect x="1.5" y="2" width="2.5" height="2" fill="#777"/><rect x="6" y="2.2" width="2.5" height="2.5" fill="#999"/><rect x="6" y="5.5" width="2.5" height="2.5" fill="#2f7ad0"/><rect x="1.5" y="5" width="2.5" height="2.5" fill="#ddd"/></svg>
<svg class="a" style="left:3.6px;top:195.6px" width="10" height="10" viewBox="0 0 10 10"><rect x="2.6" y="0.4" width="7" height="7.4" fill="#f2f2f2" stroke="#b0b0b0" stroke-width="0.5"/><rect x="3.4" y="1.2" width="2.6" height="2.4" fill="#d8d8d8"/><circle cx="7.4" cy="4.6" r="1.5" fill="#7a4a22"/><ellipse cx="3.3" cy="7.2" rx="2.9" ry="2.5" fill="#58b03a"/><ellipse cx="2.6" cy="6.4" rx="1" ry="0.8" fill="#a8e090"/></svg>
<svg class="a" style="left:3.6px;top:211.6px" width="10" height="10" viewBox="0 0 10 10"><path d="M2 4.6 L8.4 4.6 L8 9.6 L2.4 9.6Z" fill="#f4f4f4" stroke="#9a9a9a" stroke-width="0.5"/><path d="M0.8 0.8 L4.6 6" stroke="#555" stroke-width="0.9"/><path d="M9.2 0.4 L5.4 6" stroke="#d8a030" stroke-width="1.3"/></svg>
<svg class="a" style="left:3.6px;top:228.4px" width="10" height="10" viewBox="0 0 10 10"><circle cx="5" cy="5" r="3.5" fill="none" stroke="#b0b0b0" stroke-width="1.6" stroke-dasharray="1.4 0.9"/><circle cx="5" cy="5" r="2.6" fill="#e0e0e0" stroke="#b4b4b4" stroke-width="0.6"/><circle cx="5" cy="5" r="1.1" fill="#d0d0d0" stroke="#aaa" stroke-width="0.5"/></svg>
<div class="a" style="left:78.6px;top:37.6px;width:185px;height:247.5px;background:#fbfbfb;border-left:1px solid #a2a2a2;border-top:1px solid #b8b8b8"></div>
<div class="a" style="left:254.4px;top:38.6px;width:9px;height:246px;background:#efefef;border-left:1px solid #e2e2e2"></div>
<div class="a" style="left:256.2px;top:40.2px;width:5.6px;height:110px;background:#d9d9d9;border:1px solid #a9a9a9;border-radius:3px"></div>
<div class="a" style="left:79.6px;top:161.3px;width:174.8px;height:15px;background:#3b8ce0"></div>
<div class="a t" style="left:96.6px;top:40.55px;font-size:8.4px;line-height:10.08px;color:#2e2e2e;font-weight:400;transform:scaleX(0.8929);">Адаптеры Bluetooth</div>
<div class="a t" style="left:96.6px;top:55.95px;font-size:8.4px;line-height:10.08px;color:#2e2e2e;font-weight:400;transform:scaleX(0.8929);">Внешний вид</div>
<div class="a t" style="left:96.6px;top:71.35px;font-size:8.4px;line-height:10.08px;color:#2e2e2e;font-weight:400;transform:scaleX(0.8929);">Дата и время</div>
<div class="a t" style="left:96.6px;top:86.75px;font-size:8.4px;line-height:10.08px;color:#2e2e2e;font-weight:400;transform:scaleX(0.8929);">Диспетчер окон</div>
<div class="a t" style="left:96.6px;top:102.15px;font-size:8.4px;line-height:10.08px;color:#2e2e2e;font-weight:400;transform:scaleX(0.8929);">Диспетчер окон (дополнительно)</div>
<div class="a t" style="left:96.6px;top:117.55px;font-size:8.4px;line-height:10.08px;color:#2e2e2e;font-weight:400;transform:scaleX(0.8929);">Дисплей</div>
<div class="a t" style="left:96.6px;top:132.95px;font-size:8.4px;line-height:10.08px;color:#2e2e2e;font-weight:400;transform:scaleX(0.8929);">Дополнительные драйверы</div>
<div class="a t" style="left:96.6px;top:148.35px;font-size:8.4px;line-height:10.08px;color:#2e2e2e;font-weight:400;transform:scaleX(0.8929);">Дополнительные настройки сети</div>
<div class="a t" style="left:96.6px;top:163.75px;font-size:8.4px;line-height:10.08px;color:#ffffff;font-weight:400;transform:scaleX(0.8929);">Клавиатура</div>
<div class="a t" style="left:96.6px;top:179.15px;font-size:8.4px;line-height:10.08px;color:#2e2e2e;font-weight:400;transform:scaleX(0.8929);">Менеджер Bluetooth</div>
<div class="a t" style="left:96.6px;top:194.55px;font-size:8.4px;line-height:10.08px;color:#2e2e2e;font-weight:400;transform:scaleX(0.8929);">Менеджер питания</div>
<div class="a t" style="left:96.6px;top:209.95px;font-size:8.4px;line-height:10.08px;color:#2e2e2e;font-weight:400;transform:scaleX(0.8929);">Мышь и тачпад</div>
<div class="a t" style="left:96.6px;top:225.35px;font-size:8.4px;line-height:10.08px;color:#2e2e2e;font-weight:400;transform:scaleX(0.8929);">Настройки LightDM GTK+ Greeter</div>
<div class="a t" style="left:96.6px;top:240.75px;font-size:8.4px;line-height:10.08px;color:#2e2e2e;font-weight:400;transform:scaleX(0.8929);">Настройки Onboard</div>
<div class="a t" style="left:96.6px;top:256.15px;font-size:8.4px;line-height:10.08px;color:#2e2e2e;font-weight:400;transform:scaleX(0.8929);">Обновление приложений</div>
<div class="a t" style="left:96.6px;top:271.55px;font-size:8.4px;line-height:10.08px;color:#2e2e2e;font-weight:400;transform:scaleX(0.8929);">Обо мне</div>
<svg class="a" style="left:85px;top:39.5px" width="7.5" height="12.5" viewBox="0 0 7.5 12.5"><rect x="0.4" y="0.3" width="6.4" height="10.6" rx="0.6" fill="#1e5cb8"/><rect x="0.4" y="0.3" width="6.4" height="2" fill="#3a7ad0"/><path d="M4.6 3 L2.4 5.6 L4.6 8.2Z" fill="#cfe0f6"/><rect x="1" y="11.4" width="5.2" height="0.9" fill="#d8d8d8"/></svg>
<svg class="a" style="left:81.6px;top:54.8px" width="13.6" height="13.6" viewBox="0 0 13.6 13.6"><circle cx="2.2" cy="6" r="1.1" fill="#4ec04a"/><circle cx="4" cy="3" r="1.1" fill="#3a9ad8"/><circle cx="7" cy="1.8" r="1.1" fill="#5a5ad0"/><circle cx="11" cy="6.5" r="1.1" fill="#c050c8"/><circle cx="10.5" cy="10" r="1.1" fill="#e04848"/><circle cx="2.4" cy="9.6" r="1.1" fill="#d8d040"/><circle cx="5" cy="12" r="1.1" fill="#f0a030"/><path d="M1.6 12 L10.2 3.4" stroke="#262626" stroke-width="2.6" stroke-linecap="round"/><circle cx="11" cy="2.6" r="1.8" fill="#e0a0e0"/></svg>
<svg class="a" style="left:80.5px;top:69.5px" width="15" height="13.5" viewBox="0 0 15 13.5"><rect x="3.5" y="0.5" width="10.8" height="11" rx="0.8" fill="#f4f4f4" stroke="#c4c4c4" stroke-width="0.5"/><rect x="3.5" y="0.5" width="10.8" height="3" rx="0.6" fill="#d84a3a"/><text x="6.6" y="10.2" font-size="6" font-family="Liberation Sans" font-weight="700" fill="#555">28</text><circle cx="4.1" cy="9.6" r="3.1" fill="#fafafa" stroke="#222" stroke-width="0.9"/><path d="M4.1 8 L4.1 9.6 L5.3 10.2" stroke="#222" stroke-width="0.6" fill="none"/></svg>
<svg class="a" style="left:81.8px;top:85.6px" width="13" height="13" viewBox="0 0 13 13"><rect x="0.3" y="0.3" width="12.4" height="12.4" rx="1.5" fill="#3b87d6"/><rect x="2.5" y="2.5" width="5" height="4.5" fill="#e8f0f8"/><rect x="5" y="5" width="5.5" height="5" fill="#fff" stroke="#9bc" stroke-width="0.4"/></svg>
<svg class="a" style="left:81.8px;top:101px" width="14" height="13" viewBox="0 0 14 13"><rect x="0.3" y="0.3" width="12.4" height="12.4" rx="1.5" fill="#3b87d6"/><rect x="2" y="2" width="9" height="8" fill="#cfe3f5"/><path d="M2 9 L6 5 L9 10Z" fill="#f2d23a"/><path d="M6 5 L13 12.5" stroke="#222" stroke-width="1.6"/></svg>
<svg class="a" style="left:81px;top:116.3px" width="14.5" height="14" viewBox="0 0 14.5 14"><rect x="0.3" y="0.3" width="13.9" height="9.8" rx="0.8" fill="#111"/><rect x="1.2" y="1.2" width="12" height="7.5" fill="#3a3a3a"/><rect x="5" y="10.5" width="4.5" height="1.2" fill="#888"/><rect x="3.5" y="11.7" width="7.5" height="1" fill="#bbb"/></svg>
<svg class="a" style="left:81px;top:132.6px" width="14.5" height="12" viewBox="0 0 14.5 12"><rect x="0.4" y="0.8" width="12" height="10.6" rx="1" fill="#3f6a38" stroke="#2a4a26" stroke-width="0.6"/><rect x="3" y="3" width="5" height="2" fill="#7a9a6a"/><rect x="12.6" y="0.4" width="1.4" height="8" fill="#d8d8d8"/><rect x="8.2" y="7" width="4.2" height="4.4" rx="0.5" fill="#e8d6a0"/><path d="M9 7 L9 5.8 A1.3 1.3 0 0 1 11.6 5.8 L11.6 7" stroke="#bbb" stroke-width="0.6" fill="none"/></svg>
<svg class="a" style="left:82.3px;top:147.3px" width="12.5" height="12.5" viewBox="0 0 12.5 12.5"><circle cx="6.2" cy="6.2" r="6" fill="#a77bd8"/><circle cx="6.2" cy="2.8" r="0.8" fill="#e8d8f8"/><circle cx="3" cy="7.5" r="0.8" fill="#e8d8f8"/><circle cx="9.4" cy="7.5" r="0.8" fill="#e8d8f8"/><circle cx="6.2" cy="9.8" r="0.7" fill="#e8d8f8"/></svg>
<svg class="a" style="left:81.8px;top:165px" width="12.5" height="9.5" viewBox="0 0 12.5 9.5"><rect x="0.3" y="0.3" width="11.9" height="8.9" rx="0.5" fill="#e6e6e6" stroke="#b8b8b8" stroke-width="0.5"/><rect x="0.3" y="0.3" width="11.9" height="1.5" fill="#c8c8c8"/><path d="M1.5 4 H11 M1.5 6 H11 M3 8 H9.5" stroke="#bdbdbd" stroke-width="0.9" stroke-dasharray="1 0.6"/></svg>
<svg class="a" style="left:83.2px;top:177.8px" width="9" height="13" viewBox="0 0 9 13"><rect x="0.3" y="0.3" width="8.4" height="12.4" rx="4" fill="#3f8be0"/><path d="M2.5 4.5 L6.5 8.5 L4.5 10.5 L4.5 2.5 L6.5 4.5 L2.5 8.5" stroke="#fff" stroke-width="0.8" fill="none"/></svg>
<svg class="a" style="left:81px;top:193px" width="14" height="14" viewBox="0 0 14 14"><circle cx="7" cy="7" r="6.8" fill="#f2c94c" stroke="#d8a830" stroke-width="0.4"/><path d="M8 3 L5 7.5 L7 7.5 L6 11 L9 6.5 L7 6.5Z" fill="#333"/></svg>
<svg class="a" style="left:83.2px;top:208.2px" width="9" height="13.6" viewBox="0 0 9 13.6"><rect x="0.4" y="0.4" width="8.2" height="12.8" rx="4" fill="#f8f8f8" stroke="#c8c8c8" stroke-width="0.6"/><path d="M1.5 9.5 Q4.5 10.5 7.5 9.5" stroke="#ddd" stroke-width="0.5" fill="none"/></svg>
<svg class="a" style="left:81.6px;top:224px" width="12.6" height="12.8" viewBox="0 0 12.6 12.8"><rect x="0.4" y="0.4" width="11.8" height="12" rx="1" fill="#dedede" stroke="#8a8a8a" stroke-width="0.6"/><rect x="2.5" y="3" width="7.6" height="2.4" fill="#fafafa" stroke="#777" stroke-width="0.5"/><rect x="1" y="8" width="10.6" height="3.6" fill="#f4f4f4" stroke="#999" stroke-width="0.4"/><rect x="7" y="8.8" width="3.8" height="2" fill="#3a87d6"/><circle cx="2.4" cy="9.8" r="0.8" fill="#666"/></svg>
<svg class="a" style="left:81.6px;top:238.6px" width="12.6" height="13.4" viewBox="0 0 12.6 13.4"><rect x="0.3" y="0.3" width="5.7" height="6.2" rx="0.8" fill="#4a4a4a"/><rect x="6.6" y="0.3" width="5.7" height="6.2" rx="0.8" fill="#4a4a4a"/><rect x="0.3" y="6.9" width="5.7" height="6.2" rx="0.8" fill="#4a4a4a"/><rect x="6.6" y="6.9" width="5.7" height="6.2" rx="0.8" fill="#4a4a4a"/><rect x="1.7" y="1.6" width="2.9" height="3.4" fill="#c8c25a"/><rect x="8" y="8.3" width="2.9" height="3.4" fill="#4a90d9"/><rect x="8" y="1.6" width="2.9" height="3.4" fill="#5a5a5a"/><rect x="1.7" y="8.3" width="2.9" height="3.4" fill="#5a5a5a"/></svg>
<svg class="a" style="left:83.3px;top:257px" width="10" height="10" viewBox="0 0 10 10"><path d="M1.2 5.2 A3.8 3.8 0 0 1 7.8 2.6" stroke="#c4c4c4" stroke-width="1.2" fill="none"/><path d="M8.6 4.8 A3.8 3.8 0 0 1 2.2 7.4" stroke="#c4c4c4" stroke-width="1.2" fill="none"/><path d="M6.6 1.2 L9 1.6 L8 3.8Z" fill="#c4c4c4"/><path d="M3.4 8.8 L1 8.4 L2 6.2Z" fill="#c4c4c4"/></svg>
<svg class="a" style="left:81.8px;top:270px" width="12.5" height="12.5" viewBox="0 0 12.5 12.5"><defs><linearGradient id="om" x1="0" y1="0" x2="0" y2="1"><stop offset="0" stop-color="#9a9a9a"/><stop offset="1" stop-color="#4a4a4a"/></linearGradient></defs><rect x="0.3" y="0.3" width="11.9" height="11.9" fill="#111"/><rect x="1.2" y="1.2" width="10.1" height="9" fill="url(#om)"/><circle cx="6.2" cy="4.6" r="2.4" fill="#1a1a1a"/><path d="M2 10.2 Q2.4 7.2 6.2 7.2 Q10 7.2 10.4 10.2Z" fill="#1a1a1a"/></svg>
<svg class="a" style="left:8.3px;top:289.8px" width="18" height="18" viewBox="0 0 18 18"><circle cx="9" cy="9" r="8.8" fill="#3b8ce0"/><circle cx="9" cy="6.6" r="3.3" fill="#fff"/><path d="M3.8 13.6 Q4.2 10.5 9 10.5 Q13.8 10.5 14.2 13.6 Q9 16.8 3.8 13.6Z" fill="#fff"/></svg>
<div class="a t" style="left:32.8px;top:294.1px;font-size:9.296px;line-height:11.155px;color:#3a3a3a;font-weight:700;transform:scaleX(0.8929);">Gleb</div>
<div class="a" style="left:207px;top:293.8px;width:13.2px;height:11px;background:#f6f6f6;border:1px solid #bdbdbd;border-radius:1.5px"></div>
<div class="a" style="left:209.2px;top:295.8px;width:3.6px;height:3.2px;background:#777"></div>
<div class="a" style="left:209.2px;top:299.2px;width:3.6px;height:3.8px;background:#fff;border:0.5px solid #bbb"></div>
<div class="a" style="left:214.5px;top:295.6px;width:3.8px;height:3.6px;background:#e8e8e8;border:0.5px solid #bbb"></div>
<div class="a" style="left:214.5px;top:299.2px;width:3.8px;height:3.8px;background:#3b7fcf"></div>
<svg class="a" style="left:225.5px;top:292.5px" width="11.5" height="12.5" viewBox="0 0 11.5 12.5"><path d="M3 6.2 L3 4 A2.8 2.8 0 0 1 8.6 4 L8.6 6.2" stroke="#a8a8a8" stroke-width="1.5" fill="none"/><path d="M3 6.2 L3 4 A2.8 2.8 0 0 1 8.6 4 L8.6 6.2" stroke="#dcdcdc" stroke-width="0.6" fill="none"/><rect x="0.5" y="6" width="10.5" height="6.3" rx="0.8" fill="#e4b868" stroke="#c89848" stroke-width="0.4"/><rect x="0.7" y="6.2" width="10.1" height="1.4" fill="#f2d290"/></svg>
<svg class="a" style="left:242.5px;top:292.5px" width="13.5" height="13.5" viewBox="0 0 13.5 13.5"><circle cx="6.75" cy="6.75" r="6.6" fill="#333"/><path d="M4.3 4.2 A3.4 3.4 0 1 0 9.2 4.2" stroke="#e8e8e8" stroke-width="1.3" fill="none"/><path d="M6.75 2.4 L6.75 6.6" stroke="#e8e8e8" stroke-width="1.3"/></svg>
<svg class="a" style="left:258.6px;top:302.9px" width="5.4" height="5.4" viewBox="0 0 5.4 5.4"><path d="M5.4 0 L5.4 5.4 L0 5.4Z" fill="#2a2a2a"/></svg>
<div class="a" style="left:150.4px;top:178.9px;width:207px;height:18.2px;background:rgba(36,36,36,.9);border-radius:3px"></div>
<div class="a t" style="left:154.6px;top:182.99px;font-size:8.568px;line-height:10.282px;color:#e6e6e6;font-weight:400;transform:scaleX(0.8929);">Изменение настроек клавиатуры и комбинаций клавиш</div>
</body></html>
